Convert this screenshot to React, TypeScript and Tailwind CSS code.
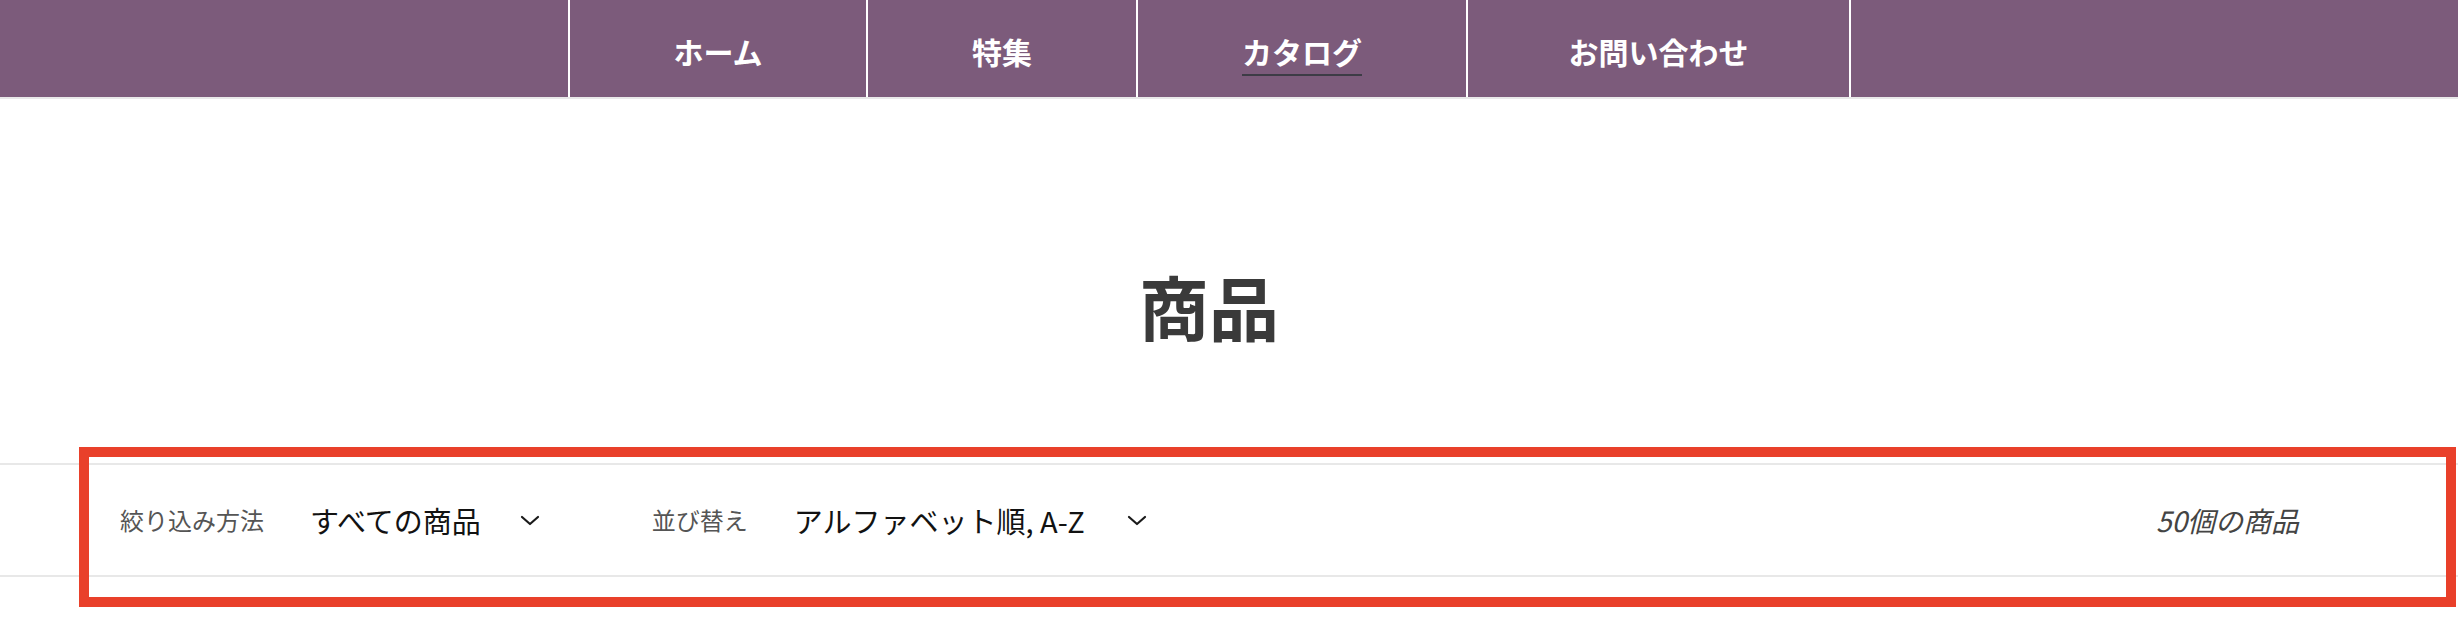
import React from 'react';

const font = { fontFamily: '"Noto Sans CJK JP", "Noto Sans", sans-serif' };

const navItems = [
  { label: 'ホーム', width: 'w-[298px]', active: false },
  { label: '特集', width: 'w-[270px]', active: false },
  { label: 'カタログ', width: 'w-[330px]', active: true },
  { label: 'お問い合わせ', width: 'w-[383px]', active: false },
];

function Chevron() {
  return (
    <svg width="20" height="11" viewBox="0 0 20 11" fill="none" className="shrink-0">
      <path d="M2 2l8 7 8-7" stroke="#1a1a1a" strokeWidth="2.2" strokeLinecap="round" strokeLinejoin="round" />
    </svg>
  );
}

export default function App() {
  return (
    <div className="relative min-h-[638px] w-full bg-white" style={font}>
      {/* top navigation */}
      <nav className="h-[99px] bg-[#7c5b7b] border-b-2 border-[#e9e9e9] flex pl-[568px]">
        <ul className="flex h-full border-r-2 border-white">
          {navItems.map((item) => (
            <li key={item.label} className={`h-full border-l-2 border-white flex items-center justify-center ${item.width}`}>
              <span className="relative text-[30px] font-bold leading-none text-white pt-[5px]">
                {item.label}
                {item.active && (
                  <span className="absolute left-0 right-0 -bottom-[10px] h-[2px] bg-[#3d3c46]" />
                )}
              </span>
            </li>
          ))}
        </ul>
      </nav>

      {/* page title */}
      <div className="h-[364px] pt-[172px] flex justify-center pr-[40px]">
        <h1 className="text-[70px] font-bold leading-none text-[#3a3a3a]">商品</h1>
      </div>

      {/* filter bar */}
      <div className="h-[114px] border-y-2 border-[#e8e8e8] flex items-center pl-[120px] pr-[159px]">
        <div className="flex items-center">
          <span className="text-[24px] leading-none text-[#555555]">絞り込み方法</span>
          <span className="ml-[46px] text-[29px] leading-none text-[#121212]">すべての商品</span>
          <span className="ml-[39px]">
            <Chevron />
          </span>
        </div>
        <div className="flex items-center ml-[112px]">
          <span className="text-[24px] leading-none text-[#555555]">並び替え</span>
          <span className="ml-[46px] text-[29px] leading-none text-[#121212]">アルファベット順, A-Z</span>
          <span className="ml-[42px]">
            <Chevron />
          </span>
        </div>
        <span className="ml-auto text-[28px] italic leading-none text-[#444444]">50個の商品</span>
      </div>

      {/* highlight annotation */}
      <div className="absolute left-[79px] top-[447px] w-[2377px] h-[160px] border-[10px] border-[#e9402a] pointer-events-none" />
    </div>
  );
}
